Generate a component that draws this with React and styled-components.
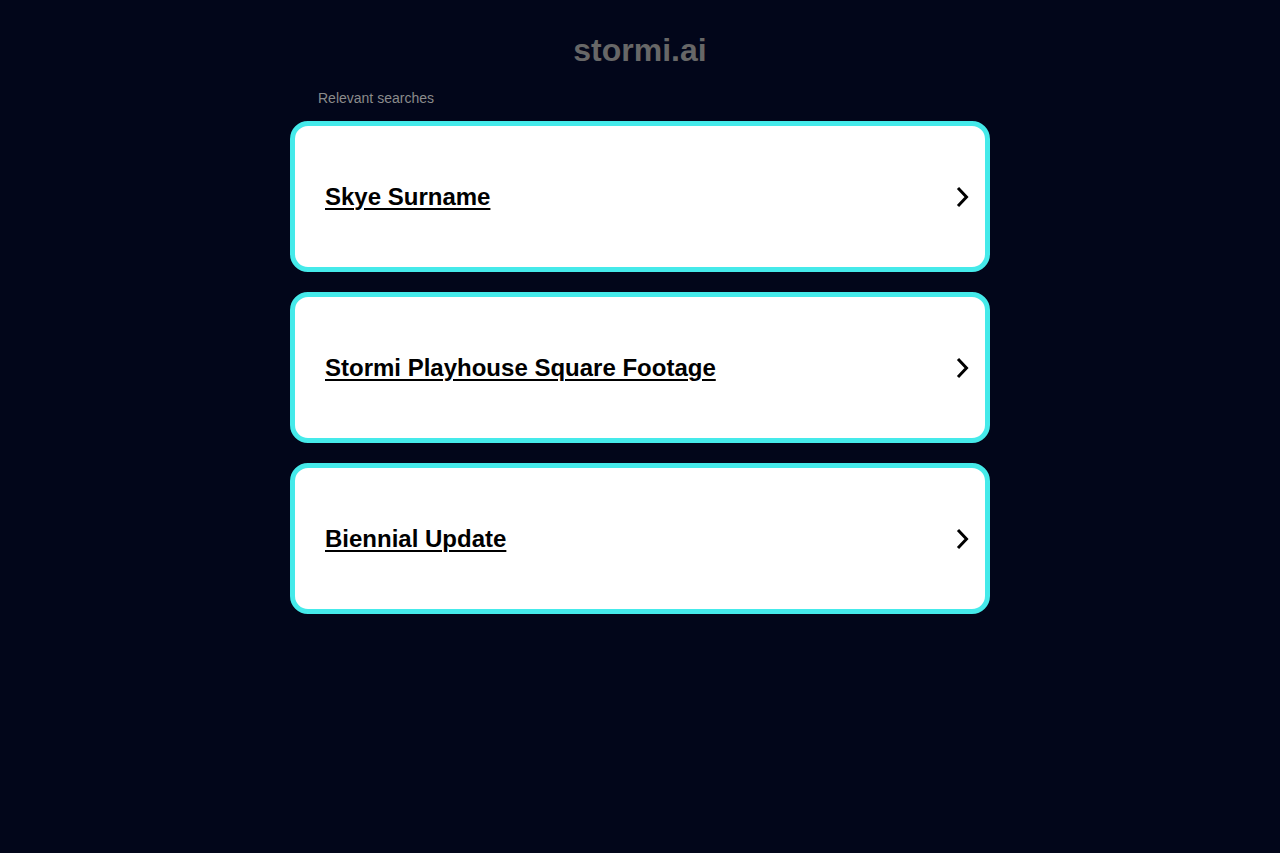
import React from "react";
import styled, { createGlobalStyle } from "styled-components";

const GlobalStyle = createGlobalStyle`
  html, body {
    margin: 0;
    padding: 0;
    background: #02061a;
    font-family: "Liberation Sans", Arial, sans-serif;
  }
`;

const Page = styled.div`
  min-height: 853px;
  background: #02061a;
  display: flex;
  flex-direction: column;
  align-items: center;
`;

const Domain = styled.h1`
  margin: 32px 0 0;
  font-size: 32px;
  line-height: 37px;
  font-weight: 700;
  color: #676767;
`;

const Column = styled.div`
  width: 700px;
  margin-top: 21px;
`;

const Label = styled.div`
  font-size: 14px;
  line-height: 16px;
  color: #8b8b8b;
  padding-left: 28px;
  margin-bottom: 15px;
`;

const List = styled.div`
  display: flex;
  flex-direction: column;
  gap: 20px;
`;

const Card = styled.a`
  box-sizing: border-box;
  height: 151px;
  display: flex;
  align-items: center;
  justify-content: space-between;
  padding: 0 15px 0 30px;
  background: #fff;
  border: 5px solid #45eaea;
  border-radius: 18px;
  text-decoration: none;
  color: #000;
`;

const Term = styled.span`
  font-size: 24px;
  font-weight: 700;
  text-decoration: underline;
  text-underline-offset: 3px;
  text-decoration-thickness: 2px;
  color: #000;
`;

const Chevron = () => (
  <svg width="16" height="22" viewBox="0 0 16 22">
    <path d="M4 2 L12.5 11 L4 20" fill="none" stroke="#000" strokeWidth="3" />
  </svg>
);

const terms = ["Skye Surname", "Stormi Playhouse Square Footage", "Biennial Update"];

export default function App() {
  return (
    <Page>
      <GlobalStyle />
      <Domain>stormi.ai</Domain>
      <Column>
        <Label>Relevant searches</Label>
        <List>
          {terms.map((t) => (
            <Card key={t} href="#">
              <Term>{t}</Term>
              <Chevron />
            </Card>
          ))}
        </List>
      </Column>
    </Page>
  );
}
